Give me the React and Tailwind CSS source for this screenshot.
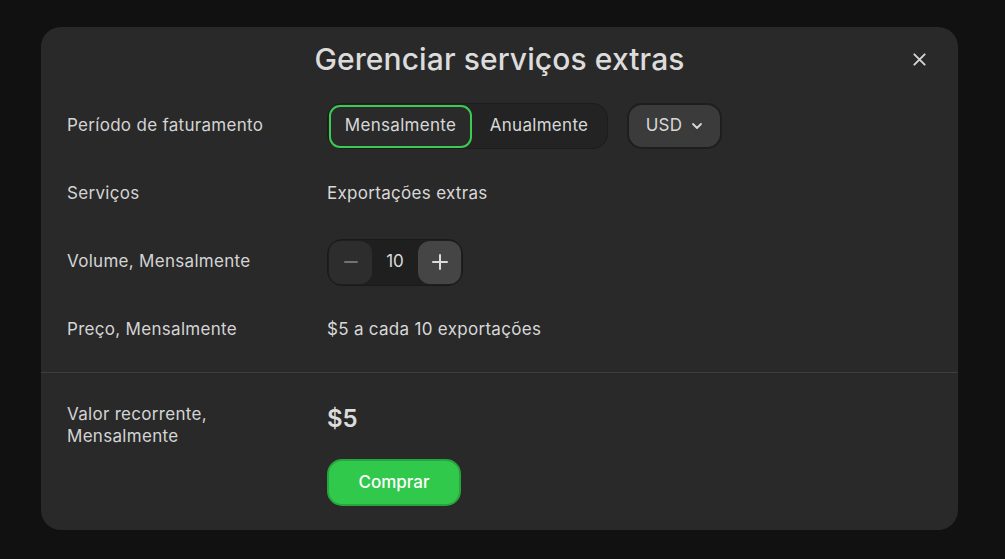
import React from "react";

function Row({ label, children, h = "h-[68px]" }) {
  return (
    <div className={`flex items-center ${h}`}>
      <div className="w-[260px] shrink-0 text-[17px] tracking-[0.3px] text-[#d4d4d4]">{label}</div>
      <div className="flex items-center">{children}</div>
    </div>
  );
}

export default function App() {
  return (
    <div
      className="w-[1005px] h-[559px] bg-[#111111] overflow-hidden pt-[27px] pl-[41px]"
      style={{ fontFamily: "Inter, 'Noto Sans', sans-serif" }}
    >
      <div className="w-[917px] h-[503px] rounded-[20px] bg-[#292929] flex flex-col">
        <div className="grid grid-cols-[1fr_auto_1fr] items-center h-[65px]">
          <div />
          <div className="text-[30px] font-medium text-[#dcdcdc] tracking-[0.1px]">Gerenciar serviços extras</div>
          <div className="flex justify-end pr-[31px]">
            <svg width="15" height="15" viewBox="0 0 16 16" fill="none">
              <path d="M2.5 2.5L13.5 13.5M13.5 2.5L2.5 13.5" stroke="#d6d6d6" strokeWidth="2" strokeLinecap="round" />
            </svg>
          </div>
        </div>
        <div className="pl-[26px] flex flex-col">
          <Row label="Período de faturamento">
            <div className="flex items-center h-[46px] rounded-[15px] bg-[#232323] border border-[#1c1c1c] p-[1px]">
              <div className="h-[43px] w-[143px] flex items-center justify-center rounded-[11px] border-2 border-[#3bcb52] bg-[#2a2a2a] text-[17px] tracking-[0.3px] text-[#d8d8d8]">
                Mensalmente
              </div>
              <div className="h-[43px] w-[134px] flex items-center justify-center text-[17px] tracking-[0.3px] text-[#d8d8d8]">
                Anualmente
              </div>
            </div>
            <div className="ml-[19px] h-[46px] w-[95px] flex items-center justify-center gap-[9px] rounded-[15px] bg-[#3b3b3b] border-2 border-[#1e1e1e] text-[17px] tracking-[0.3px] text-[#d8d8d8]">
              <span>USD</span>
              <svg width="12" height="8" viewBox="0 0 12 8" fill="none">
                <path d="M2 2L6 6L10 2" stroke="#d8d8d8" strokeWidth="1.8" strokeLinecap="round" strokeLinejoin="round" />
              </svg>
            </div>
          </Row>
          <Row label="Serviços">
            <span className="text-[17px] tracking-[0.3px] text-[#d8d8d8]">Exportações extras</span>
          </Row>
          <Row label="Volume, Mensalmente">
            <div className="flex items-center h-[47px] w-[136px] rounded-[15px] bg-[#1f1f1f] border border-[#1a1a1a] p-[1px]">
              <div
                className="h-[43px] w-[43px] flex items-center justify-center rounded-[12px] bg-[#2d2d2d]"
                style={{ backgroundImage: "radial-gradient(#3a3a3a 0.6px, transparent 0.7px)", backgroundSize: "4px 4px" }}
              >
                <svg width="16" height="16" viewBox="0 0 16 16" fill="none">
                  <path d="M2 8H14" stroke="#727272" strokeWidth="2" strokeLinecap="round" />
                </svg>
              </div>
              <div className="flex-1 text-center text-[17px] text-[#dcdcdc]">10</div>
              <div className="h-[43px] w-[43px] flex items-center justify-center rounded-[12px] bg-[#454545]">
                <svg width="18" height="18" viewBox="0 0 18 18" fill="none">
                  <path d="M2 9H16M9 2V16" stroke="#dcdcdc" strokeWidth="2" strokeLinecap="round" />
                </svg>
              </div>
            </div>
          </Row>
          <Row label="Preço, Mensalmente">
            <span className="text-[17px] tracking-[0.3px] text-[#d8d8d8]">$5 a cada 10 exportações</span>
          </Row>
        </div>
        <div className="mt-[8px] h-px bg-[#3e3e3e]" />
        <div className="pl-[26px] pt-[30px] flex">
          <div className="w-[260px] shrink-0 text-[17px] tracking-[0.3px] leading-[22px] text-[#d4d4d4]">
            Valor recorrente,
            <br />
            Mensalmente
          </div>
          <div className="flex flex-col">
            <div className="text-[24px] font-semibold leading-[32px] text-[#dcdcdc]">$5</div>
            <div className="mt-[24px] h-[47px] w-[134px] flex items-center justify-center rounded-[15px] bg-[#30c94c] border-2 border-[#27a63e] text-[17px] font-medium text-white">
              Comprar
            </div>
          </div>
        </div>
      </div>
    </div>
  );
}
